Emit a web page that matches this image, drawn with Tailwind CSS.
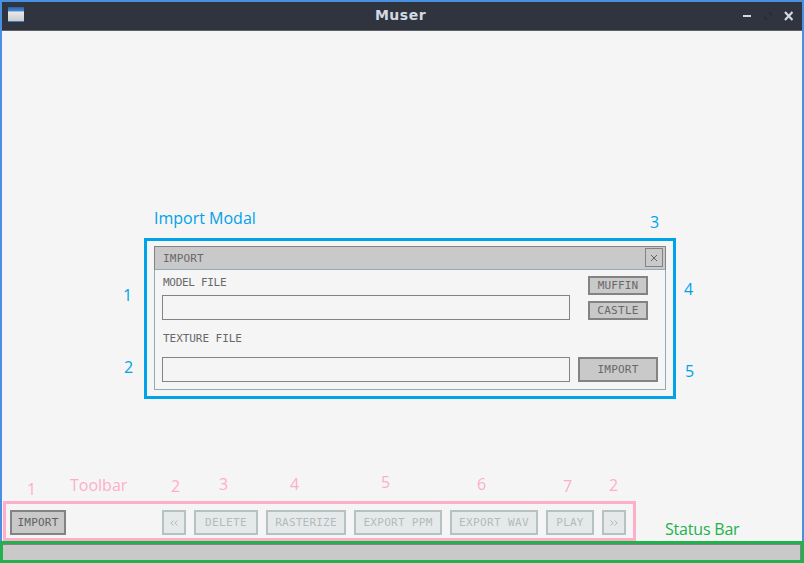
<!DOCTYPE html>
<html lang="en">
<head>
<meta charset="utf-8">
<title>Muser</title>
<script src="https://cdn.jsdelivr.net/npm/@tailwindcss/browser@4"></script>
</head>
<body class="w-[804px] h-[563px] overflow-hidden bg-[#f5f5f5]">
<div class="relative w-[804px] h-[563px] flex flex-col font-['DejaVu_Sans_Mono',monospace] text-[11px] leading-none text-[#686868]">
  <!-- Title bar -->
  <header class="h-[31px] shrink-0 border-x-2 border-t-2 border-[#4a90e2] bg-[#2f343f]">
    <div class="h-[29px] border-b border-b-[#5d6066] grid grid-cols-[1fr_auto_1fr] items-center pl-[6px] pr-[9px]">
      <svg class="mb-px" width="16" height="17" viewBox="0 0 16 17">
        <defs>
          <linearGradient id="a" x2="0" y2="1"><stop stop-color="#2860a8"/><stop offset="1" stop-color="#4a88d0"/></linearGradient>
          <linearGradient id="b" x2="0" y2="1"><stop stop-color="#e8e8e8"/><stop offset="1" stop-color="#cccccc"/></linearGradient>
        </defs>
        <path fill="#20344f" d="M0 15h16v1H0z"/><path fill="url(#a)" d="M0 0h16v4H0z"/><path fill="#9ebde0" d="M0 4h16v1H0z"/><path fill="url(#b)" d="M0 5h16v9H0z"/><path fill="#477cb8" d="M0 14h16v1H0z"/>
      </svg>
      <h1 class="font-['DejaVu_Sans',sans-serif] font-bold text-[14px] leading-[18px] tracking-[0.5px] text-[#d3dae3] mb-[2px]">Muser</h1>
      <svg class="justify-self-end mb-px" width="50" height="10" viewBox="0 0 50 10">
        <path fill="#d3dae3" d="M0 4h8v2H0z"/>
        <path fill="#292e38" d="M24 1h5v5zM21 4v5h5z"/>
        <path stroke="#d3dae3" stroke-width="2.2" d="M42 1l7.500 8M49.500 1L42 9"/>
      </svg>
    </div>
  </header>

  <!-- Canvas -->
  <main class="relative h-[470px] shrink-0 border-x-2 border-[#4a90e2]"></main>

  <!-- Toolbar -->
  <section class="relative z-10 ml-[3px] w-[633px] h-[40px] shrink-0 border-[3px] border-[#ffaec9] flex items-start pt-[6px] pl-[4px] gap-2 text-[#b0bbbb]">
    <button class="w-[56px] h-[25px] mr-[88px] border-2 border-[#838383] bg-[#c9c9c9] text-[#606060] tracking-[0.2px]">IMPORT</button>
    <button class="w-[24px] h-[25px] border-2 border-[#b5c1c2] bg-[#e6e9e9] grid place-items-center"><svg width="8" height="6" viewBox="0 0 8 6" fill="none" stroke="#adb9ba"><path d="M3.500 .5L.8 3l2.700 2.500M7.500 .5L4.800 3l2.700 2.500"/></svg></button>
    <button class="w-[64px] h-[25px] border-2 border-[#b5c1c2] bg-[#e6e9e9] tracking-[0.4px]">DELETE</button>
    <button class="w-[80px] h-[25px] border-2 border-[#b5c1c2] bg-[#e6e9e9] tracking-[0.2px]">RASTERIZE</button>
    <button class="w-[88px] h-[25px] border-2 border-[#b5c1c2] bg-[#e6e9e9] tracking-[0.3px]">EXPORT PPM</button>
    <button class="w-[88px] h-[25px] border-2 border-[#b5c1c2] bg-[#e6e9e9] tracking-[0.4px]">EXPORT WAV</button>
    <button class="w-[48px] h-[25px] border-2 border-[#b5c1c2] bg-[#e6e9e9] tracking-[0.2px]">PLAY</button>
    <button class="w-[24px] h-[25px] border-2 border-[#b5c1c2] bg-[#e6e9e9] grid place-items-center"><svg width="8" height="6" viewBox="0 0 8 6" fill="none" stroke="#adb9ba"><path d="M.5 .5L3.200 3L.5 5.500M4.500 .5L7.200 3L4.500 5.500"/></svg></button>
  </section>
  <!-- Window edges beside the toolbar -->
  <div class="absolute left-0 top-[501px] w-[804px] h-[40px] border-x-2 border-[#4a90e2]"></div>

  <!-- Status bar -->
  <footer class="h-[22px] shrink-0 border-[3px] border-[#22b14c]">
    <div class="h-full border-t border-r border-[#838383] bg-[#c9c9c9]"></div>
  </footer>

  <!-- Import modal -->
  <section class="absolute left-[144px] top-[238px] w-[532px] h-[161px] border-[3px] border-[#00a2e8] pt-[5px] px-[7px]">
    <div class="h-[144px] border border-[#90abb5]">
      <div class="-mx-px -mt-px h-[24px] border border-[#838383] border-b-[#90abb5] bg-[#c9c9c9] flex items-center justify-between pl-2 pr-[2px]">
        <span class="tracking-[0.2px]">IMPORT</span>
        <button class="w-[18px] h-[19px] mb-px border border-[#838383] grid place-items-center"><svg width="8" height="8" viewBox="0 0 8 8" stroke="#606060"><path d="M1 1l6 6M7 1L1 7"/></svg></button>
      </div>
      <div class="grid grid-cols-[408px_80px] gap-x-2 pl-[7px]">
        <div>
          <label class="block h-[25px] pt-[7px] pl-px tracking-[-0.300px]">MODEL FILE</label>
          <div class="h-[25px] border border-[#838383]"></div>
          <label class="block h-[37px] pt-[13px] pl-px tracking-[-0.050px]">TEXTURE FILE</label>
          <div class="h-[25px] border border-[#838383]"></div>
        </div>
        <div class="pt-[6px] flex flex-col items-center">
          <button class="w-[60px] h-[19px] mb-[6px] border-2 border-[#838383] bg-[#c9c9c9] tracking-[0.100px]">MUFFIN</button>
          <button class="w-[60px] h-[19px] mb-[37px] border-2 border-[#838383] bg-[#c9c9c9] tracking-[0.300px]">CASTLE</button>
          <button class="w-[80px] h-[25px] border-2 border-[#838383] bg-[#c9c9c9] tracking-[0.200px]">IMPORT</button>
        </div>
      </div>
    </div>
  </section>

  <!-- Callout labels -->
  <div class="font-['Open_Sans',sans-serif] text-[16px] leading-[22px]">
    <div class="text-[#00a2e8]">
      <span class="absolute left-[154px] top-[207px]">Import Modal</span>
      <span class="absolute left-[650px] top-[211px]">3</span>
      <span class="absolute left-[123px] top-[284px]">1</span>
      <span class="absolute left-[684px] top-[278px]">4</span>
      <span class="absolute left-[124px] top-[356px]">2</span>
      <span class="absolute left-[685px] top-[360px]">5</span>
    </div>
    <div class="text-[#ffaec9]">
      <span class="absolute left-[70px] top-[474px]">Toolbar</span>
      <span class="absolute left-[27px] top-[478px]">1</span>
      <span class="absolute left-[171px] top-[475px]">2</span>
      <span class="absolute left-[219px] top-[473px]">3</span>
      <span class="absolute left-[290px] top-[473px]">4</span>
      <span class="absolute left-[381px] top-[471px]">5</span>
      <span class="absolute left-[477px] top-[473px]">6</span>
      <span class="absolute left-[563px] top-[475px]">7</span>
      <span class="absolute left-[609px] top-[474px]">2</span>
    </div>
    <span class="absolute left-[665px] top-[518px] tracking-[-0.2px] text-[#22b14c]">Status Bar</span>
  </div>
</div>
</body>
</html>
